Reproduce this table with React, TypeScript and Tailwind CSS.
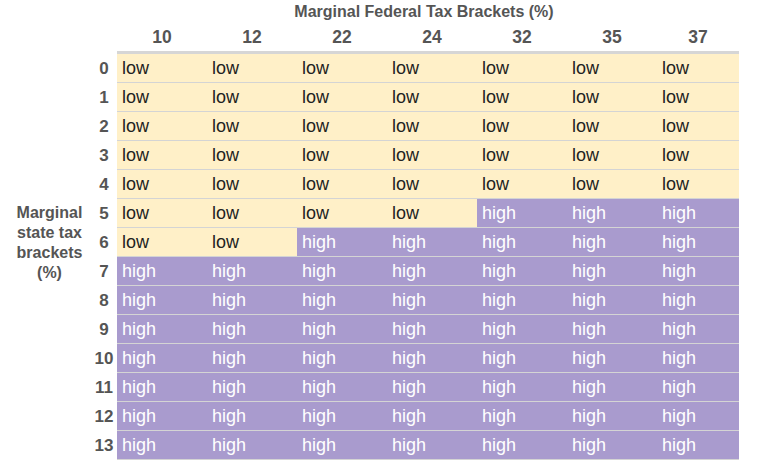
import React from 'react'

const federal = [10, 12, 22, 24, 32, 35, 37]
const stateRows = Array.from({ length: 14 }, (_, i) => i)

// first column index that turns "high" for a given state bracket
function highFrom(row: number) {
  if (row >= 7) return 0
  if (row === 6) return 2
  if (row === 5) return 4
  return 99
}

const colW = ['w-[90px]', 'w-[90px]', 'w-[90px]', 'w-[90px]', 'w-[90px]', 'w-[90px]', 'w-[82px]']

export default function App() {
  return (
    <div className="w-[762px] h-[467px] bg-white font-['Liberation_Sans',Arial,sans-serif] text-[#222]">
      {/* Federal title */}
      <div className="flex">
        <div className="w-[117px] shrink-0" />
        <div className="w-[622px] pr-2 h-[24px] leading-[24px] text-center text-[16px] font-bold text-[#555]">
          Marginal Federal Tax Brackets (%)
        </div>
      </div>

      {/* Column headers */}
      <div className="flex">
        <div className="w-[117px] shrink-0" />
        {federal.map((f, i) => (
          <div
            key={f}
            className={`${colW[i]} h-[27px] flex items-center justify-center text-[17.5px] font-bold text-[#555]`}
          >
            {f}
          </div>
        ))}
      </div>
      <div className="flex">
        <div className="w-[117px] shrink-0" />
        <div className="w-[622px] h-[3px] bg-[#d6d6d6]" />
      </div>

      {/* Body */}
      <div className="flex">
        <div className="w-[91px] shrink-0 pl-2 pt-[149px]">
          <div className="w-[83px] text-center text-[16px] leading-[20px] font-bold text-[#555]">
            Marginal state tax brackets (%)
          </div>
        </div>
        <div className="w-[26px] shrink-0">
          {stateRows.map((r) => (
            <div
              key={r}
              className="h-[29px] flex items-center justify-center text-[17px] font-bold text-[#555]"
            >
              {r}
            </div>
          ))}
        </div>
        <div className="w-[622px]">
          {stateRows.map((r) => (
            <div key={r} className="h-[29px] flex border-b border-[#d4d4d4]">
              {federal.map((f, i) => {
                const high = i >= highFrom(r)
                return (
                  <div
                    key={f}
                    className={
                      colW[i] +
                      ' flex items-center pl-[5px] text-[18px] ' +
                      (high ? 'bg-[#a99bce] text-white' : 'bg-[#fff0c8] text-[#222]')
                    }
                  >
                    {high ? 'high' : 'low'}
                  </div>
                )
              })}
            </div>
          ))}
        </div>
      </div>
    </div>
  )
}
